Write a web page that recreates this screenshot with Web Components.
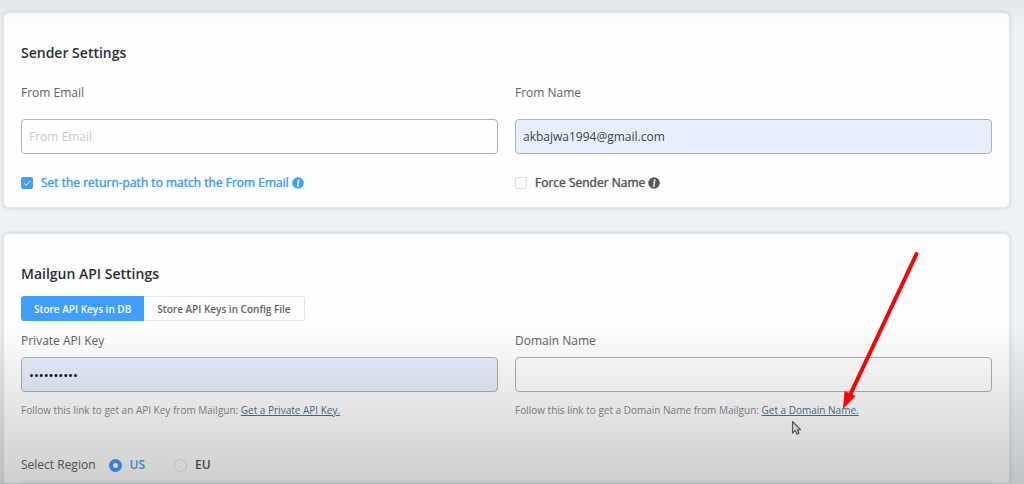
<!DOCTYPE html>
<html lang="en">
<head>
<meta charset="utf-8">
<meta name="viewport" content="width=device-width, initial-scale=1">
<title>Mail Settings</title>
<style>
html { height: 100%; background: #eef2f5; }
body { margin: 0; height: 100%; overflow: hidden; font-family: "Open Sans", "Noto Sans", sans-serif; font-size: 12px; line-height: 20px; color: #606266; }
</style>
</head>
<body>
<settings-page></settings-page>
<script>
const define = (name, html, setup) => {
  const tpl = document.createElement('template');
  tpl.innerHTML = html;
  customElements.define(name, class extends HTMLElement {
    constructor() {
      super();
      this.attachShadow({ mode: 'open' }).append(tpl.content.cloneNode(true));
    }
    connectedCallback() { if (setup) setup(this, this.shadowRoot); }
  });
};

define('info-icon', `
<style>:host { display: inline-block; width: 12px; height: 12px; } svg { display: block; }</style>
<svg viewBox="0 0 12 12" width="12" height="12" aria-hidden="true">
  <circle cx="6" cy="6" r="5.8" fill="currentColor"/>
  <circle cx="6.7" cy="3.2" r="0.95" fill="#fff"/>
  <path d="M5.1 5.2h1.5L5.7 9h1" fill="none" stroke="#fff" stroke-width="1.3"/>
</svg>`);

define('settings-card', `
<style>
:host { display: block; background: #fefefe; border: 1px solid #e4e8eb; border-radius: 6px; box-shadow: 0 0 3px 1px #d5dade; padding: 29px 17px 14px; }
h2 { margin: 0; font-size: 14px; line-height: 22px; font-weight: 600; color: #2b2e33; }
</style>
<h2><slot name="title"></slot></h2>
<slot></slot>`);

define('field-columns', `
<style>:host { display: grid; grid-template-columns: 1fr 1fr; column-gap: 17px; }</style>
<slot></slot>`);

define('text-field', `
<style>
:host { display: block; --gap: 16px; }
:host([compact]) { --gap: 6px; }
label { display: block; line-height: 20px; margin-bottom: var(--gap); color: #606266; }
input { display: block; box-sizing: border-box; width: 100%; height: 35px; padding: 0 7px; border: 1px solid #aeb1b5; border-radius: 4px; background: #fefefe; font: inherit; color: #3a3f47; outline: none; }
input::placeholder { color: #c8c9cc; opacity: 1; }
input.filled { background: #e8effc; }
input[type=password] { color: #000; font-size: 13px; }
</style>
<label for="control"></label>
<input id="control">
<slot></slot>`, (host, root) => {
  const input = root.querySelector('input');
  root.querySelector('label').textContent = host.getAttribute('label');
  input.type = host.getAttribute('type') || 'text';
  input.placeholder = host.getAttribute('placeholder') || '';
  input.value = host.getAttribute('value') || '';
  input.classList.toggle('filled', input.value !== '');
});

define('help-text', `
<style>
:host { display: block; margin-top: 9px; font-size: 10px; line-height: 18px; color: #85878a; }
a { color: #467395; text-decoration: underline; }
</style>
<slot></slot> <a href="#"><slot name="link"></slot></a>`);

define('check-option', `
<style>
:host { display: block; }
label { display: flex; align-items: center; line-height: 20px; text-shadow: 0 0 1px currentColor; font-size: 12px; color: #55575b; }
:host([checked]) label { color: #409eff; }
input { appearance: none; box-sizing: border-box; flex: none; width: 12px; height: 12px; margin: 0 8px 0 0; border: 1px solid #dcdfe6; border-radius: 2px; background: #fff; }
input:checked { border-color: #409eff; background: #409eff url("data:image/svg+xml,%3Csvg xmlns='http://www.w3.org/2000/svg' viewBox='0 0 10 10'%3E%3Cpath d='M2 5.2l2.2 2.2L8.2 3' fill='none' stroke='white'/%3E%3C/svg%3E") center / 10px 10px no-repeat; }
info-icon { margin-left: 3px; }
</style>
<label><input type="checkbox"><slot></slot><info-icon></info-icon></label>`, (host, root) => {
  root.querySelector('input').checked = host.hasAttribute('checked');
});

define('storage-switch', `
<style>
:host { display: flex; }
button { box-sizing: border-box; height: 25px; margin: 0; padding: 0 13px; border: 1px solid #e1e3e8; border-left: 0; border-radius: 0 3px 3px 0; font: 600 10px/20px "Open Sans", "Noto Sans", sans-serif; color: #606266; background: #fefefe; }
button[aria-pressed=true] { padding: 0 12px; background: #409eff; border: 1px solid #409eff; color: #fff; border-radius: 3px 0 0 3px; }
</style>
<button type="button" aria-pressed="true">Store API Keys in DB</button><button type="button" aria-pressed="false">Store API Keys in Config File</button>`);

define('region-picker', `
<style>
:host { display: block; }
fieldset { display: flex; align-items: center; margin: 0; padding: 0; border: 0; }
label { display: flex; align-items: center; margin-left: 13px; font-size: 12px; font-weight: 600; color: #55575b; }
label + label { margin-left: 29px; }
label:has(:checked) { color: #409eff; }
input { appearance: none; box-sizing: border-box; width: 13px; height: 13px; margin: 0 8px 0 0; border: 1px solid #dcdfe6; border-radius: 50%; background: #fefefe; }
input:checked { background: #fff; border: 4px solid #409eff; }
</style>
<fieldset aria-labelledby="caption">
  <span id="caption">Select Region</span>
  <label><input type="radio" name="region" checked>US</label>
  <label><input type="radio" name="region">EU</label>
</fieldset>`);

define('pointer-arrow', `
<style>:host { position: absolute; z-index: 1; right: 87px; top: 15px; pointer-events: none; } svg { display: block; }</style>
<svg width="84" height="164" viewBox="0 0 84 164" aria-hidden="true">
  <path d="M78.5 5L12.5 145" stroke="#f00" stroke-width="4" stroke-linecap="round"/>
  <path d="M5 160L6.500 142L17.500 147Z" fill="#f00"/>
</svg>`);

define('mouse-cursor', `
<style>:host { position: absolute; right: 206px; top: 186px; pointer-events: none; } svg { display: block; }</style>
<svg width="12" height="16" viewBox="0 0 12 16" aria-hidden="true">
  <path d="M1.5 1.5V13L4.2 10.6L6 14.2L8 13.3L6.4 9.700H9.5Z" fill="#e8e8e8" stroke="#55585c" stroke-width="1.1" stroke-linejoin="round"/>
</svg>`);

define('settings-page', `
<style>
:host { display: block; position: relative; min-height: 100%; }
main { padding: 12px 14px 0 3px; }
.mailgun { position: relative; margin-top: 25px; padding-bottom: 0; border-bottom: 0; border-radius: 6px 6px 0 0; }
.sender-fields { margin-top: 19px; }
.options { margin-top: 19px; }
storage-switch { margin-top: 11px; }
.keys { margin-top: 10px; }
region-picker { margin-top: 36px; }
.panel { height: 3px; margin-top: 5px; border-radius: 3px 3px 0 0; background: #f2f2f2; }
.shade { position: fixed; inset: auto 0 0; height: 33%; pointer-events: none; background: linear-gradient(transparent, rgb(0 0 0 / 19%)); }
.top { inset: 0 0 auto; height: 30px; background: linear-gradient(rgb(0 0 0 / 4%), transparent); }
</style>
<main>
  <settings-card>
    <span slot="title">Sender Settings</span>
    <field-columns class="sender-fields">
      <text-field label="From Email" placeholder="From Email"></text-field>
      <text-field label="From Name" value="akbajwa1994@gmail.com"></text-field>
    </field-columns>
    <field-columns class="options">
      <check-option checked>Set the return-path to match the From Email</check-option>
      <check-option>Force Sender Name</check-option>
    </field-columns>
  </settings-card>
  <settings-card class="mailgun">
    <span slot="title">Mailgun API Settings</span>
    <storage-switch></storage-switch>
    <field-columns class="keys">
      <text-field compact type="password" label="Private API Key" value="0123456789">
        <help-text>Follow this link to get an API Key from Mailgun:<span slot="link">Get a Private API Key.</span></help-text>
      </text-field>
      <text-field compact label="Domain Name">
        <help-text>Follow this link to get a Domain Name from Mailgun:<span slot="link">Get a Domain Name.</span></help-text>
      </text-field>
    </field-columns>
    <region-picker></region-picker>
    <div class="panel"></div>
    <mouse-cursor></mouse-cursor>
    <pointer-arrow></pointer-arrow>
  </settings-card>
</main>
<div class="shade top"></div>
<div class="shade"></div>`);
</script>
</body>
</html>
